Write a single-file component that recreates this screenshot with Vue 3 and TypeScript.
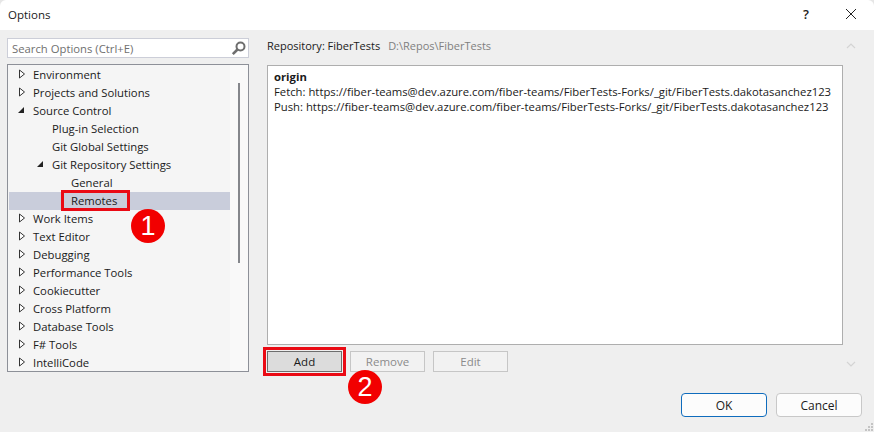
<script setup lang="ts">
interface Row { label: string; level: number; arrow: 'closed' | 'open' | 'none'; selected?: boolean; boxed?: boolean }
const rows: Row[] = [
  { label: 'Environment', level: 0, arrow: 'closed' },
  { label: 'Projects and Solutions', level: 0, arrow: 'closed' },
  { label: 'Source Control', level: 0, arrow: 'open' },
  { label: 'Plug-in Selection', level: 1, arrow: 'none' },
  { label: 'Git Global Settings', level: 1, arrow: 'none' },
  { label: 'Git Repository Settings', level: 1, arrow: 'open' },
  { label: 'General', level: 2, arrow: 'none' },
  { label: 'Remotes', level: 2, arrow: 'none', selected: true, boxed: true },
  { label: 'Work Items', level: 0, arrow: 'closed' },
  { label: 'Text Editor', level: 0, arrow: 'closed' },
  { label: 'Debugging', level: 0, arrow: 'closed' },
  { label: 'Performance Tools', level: 0, arrow: 'closed' },
  { label: 'Cookiecutter', level: 0, arrow: 'closed' },
  { label: 'Cross Platform', level: 0, arrow: 'closed' },
  { label: 'Database Tools', level: 0, arrow: 'closed' },
  { label: 'F# Tools', level: 0, arrow: 'closed' },
  { label: 'IntelliCode', level: 0, arrow: 'closed' },
]
const gripDots: [number, number][] = [[9, 1], [9, 4], [6, 4], [9, 7], [6, 7], [3, 7]]
</script>

<template>
  <div class="dialog">
    <header class="titlebar">
      <span class="title">Options</span>
      <span class="help">?</span>
      <svg class="close" width="12" height="12" viewBox="0 0 12 12"><path d="M1 1l10 10M11 1L1 11" stroke="#222" stroke-width="1" fill="none" /></svg>
    </header>

    <div class="main">
      <aside class="left">
        <div class="search">
          <span class="placeholder">Search Options (Ctrl+E)</span>
          <svg width="15" height="15" viewBox="0 0 15 15"><circle cx="9.5" cy="5.5" r="4" fill="none" stroke="#6e6e6e" stroke-width="2" /><path d="M6.5 8.5L1.8 13.2" stroke="#6e6e6e" stroke-width="2.6" /></svg>
        </div>
        <div class="tree">
          <ul class="rows">
            <li v-for="r in rows" :key="r.label" class="row" :class="{ selected: r.selected }">
              <span class="indent" :class="'lv' + r.level"></span>
              <svg class="arrow" width="8" height="10" viewBox="0 0 8 10">
                <path v-if="r.arrow === 'closed'" d="M1.5 1v8L6.5 5z" fill="#fff" stroke="#333" stroke-width="1" />
                <path v-else-if="r.arrow === 'open'" d="M0 8h6V2z" fill="#222" />
              </svg>
              <span class="label" :class="{ boxed: r.boxed }">{{ r.label }}</span>
            </li>
          </ul>
          <div class="scroll"><div class="thumb"></div></div>
          <span class="badge badge1">1</span>
        </div>
      </aside>

      <section class="right">
        <div class="content">
          <div class="repo"><span>Repository: FiberTests</span><span class="path">D:\Repos\FiberTests</span></div>
          <div class="remotes">
            <div class="name">origin</div>
            <div>Fetch: https://fiber-teams@dev.azure.com/fiber-teams/FiberTests-Forks/_git/FiberTests.dakotasanchez123</div>
            <div>Push: https://fiber-teams@dev.azure.com/fiber-teams/FiberTests-Forks/_git/FiberTests.dakotasanchez123</div>
          </div>
          <div class="actions">
            <button class="btn add">Add</button>
            <button class="btn off">Remove</button>
            <button class="btn off">Edit</button>
            <span class="badge badge2">2</span>
          </div>
        </div>
        <div class="gutter">
          <svg width="12" height="8" viewBox="0 0 12 8"><path d="M2 6l4-4 4 4" fill="none" stroke="#d4d4d4" stroke-width="1.2" /></svg>
          <svg width="12" height="8" viewBox="0 0 12 8"><path d="M2 2l4 4 4-4" fill="none" stroke="#d4d4d4" stroke-width="1.2" /></svg>
        </div>
      </section>
    </div>

    <footer class="footer">
      <button class="dlg primary">OK</button>
      <button class="dlg">Cancel</button>
    </footer>

    <svg class="grip" width="12" height="10" viewBox="0 0 12 10">
      <rect v-for="d in gripDots" :key="d[0] + '-' + d[1]" :x="d[0]" :y="d[1]" width="2" height="2" fill="#c4c4c4" />
    </svg>
    <svg class="corner corner-l" width="8" height="8" viewBox="0 0 8 8"><path d="M0 8V6a6 6 0 0 1 6-6h2V0H0z" fill="#e6e6e6" /></svg>
    <svg class="corner corner-r" width="8" height="8" viewBox="0 0 8 8"><path d="M8 8V6a6 6 0 0 0-6-6H0V0h8z" fill="#e6e6e6" /></svg>
  </div>
</template>

<style scoped>
.dialog {
  width: 874px;
  height: 432px;
  background: #efefef;
  display: flex;
  flex-direction: column;
  font-family: "Open Sans", "Noto Sans", sans-serif;
  font-size: 11.3px;
  color: #1a1a1a;
  overflow: hidden;
  position: relative;
}
.titlebar {
  height: 30px;
  box-sizing: border-box;
  background: #fff;
  display: flex;
  align-items: center;
  padding: 0 17px 2px 8px;
  flex: none;
}
.title { flex: 1; font-size: 11.5px; }
.help { font-size: 13px; margin-right: 36px; font-weight: 600; }
.main {
  display: flex;
  padding: 8px 0 0 7px;
  height: 334px;
  flex: none;
}
.left { width: 242px; display: flex; flex-direction: column; gap: 6px; flex: none; }
.search {
  height: 20px;
  box-sizing: border-box;
  background: #fff;
  border: 1px solid #ccced8;
  display: flex;
  align-items: center;
  justify-content: space-between;
  padding: 0 2px 0 4px;
}
.placeholder { color: #6f6f6f; }
.tree {
  height: 308px;
  box-sizing: border-box;
  border: 1px solid #8d9098;
  background: #f5f5f5;
  display: flex;
  position: relative;
}
.rows {
  list-style: none;
  margin: 0;
  padding: 0 0 0 1px;
  flex: 1;
  overflow: hidden;
}
.row {
  height: 18px;
  box-sizing: border-box;
  display: flex;
  align-items: center;
  padding-left: 9px;
}
.selected { background: #c9cddb; margin-top: 1px; margin-bottom: -1px; padding-bottom: 2px; }
.indent { flex: none; }
.lv1 { width: 19px; }
.lv2 { width: 38px; }
.arrow { flex: none; margin-right: 7px; width: 8px; }
.label { white-space: nowrap; position: relative; }
.boxed::after {
  content: "";
  position: absolute;
  left: -10px;
  right: -13px;
  top: -3px;
  bottom: -3px;
  border: 3px solid #ea0a14;
}
.scroll {
  width: 18px;
  flex: none;
  background: #f9f9f9;
  padding: 18px 0 0 8px;
  box-sizing: border-box;
}
.thumb { width: 2px; height: 180px; background: #85878c; }
.badge {
  position: absolute;
  width: 34px;
  height: 34px;
  border-radius: 50%;
  background: #f20000;
  color: #fff;
  font-family: "Liberation Sans", sans-serif;
  font-size: 27px;
  line-height: 34px;
  text-align: center;
}
.badge1 { left: 123px; top: 144px; }
.right { display: flex; margin-left: 18px; flex: 1; }
.content { width: 576px; flex: none; }
.repo { height: 27px; line-height: 15px; display: flex; gap: 8px; font-size: 11px; }
.path { color: #7f7f7f; }
.remotes {
  height: 280px;
  box-sizing: border-box;
  background: #fff;
  border: 1px solid #aeaeae;
  padding: 3px 6px;
  line-height: 15px;
  white-space: nowrap;
}
.name { font-weight: 700; }
.actions { display: flex; gap: 8px; margin-top: 6px; position: relative; }
.btn {
  width: 75px;
  height: 21px;
  box-sizing: border-box;
  font: inherit;
  font-size: 11.5px;
  padding: 0;
}
.add { background: #dcdcdc; border: 1px solid #6e6e6e; outline: 3px solid #ea0a14; outline-offset: 1px; color: #1a1a1a; }
.off { background: #f2f2f2; border: 1px solid #c6c6c6; color: #8b8b8b; }
.badge2 { left: 81px; top: 19px; }
.gutter {
  width: 14px;
  padding: 4px 0 0 0;
  display: flex;
  flex-direction: column;
  align-items: flex-end;
  gap: 310px;
}
.footer {
  display: flex;
  justify-content: flex-end;
  gap: 9px;
  padding: 21px 12px 0 0;
}
.dlg {
  width: 86px;
  height: 24px;
  box-sizing: border-box;
  background: #fcfcfc;
  border: 1px solid #c8c8c8;
  border-radius: 4px;
  font: inherit;
  font-size: 12px;
  color: #1b1b1b;
  padding: 0;
}
.primary { border-color: #0f6cbd; }
.grip { position: absolute; right: 0; bottom: 0; }
.corner { position: absolute; top: 0; }
.corner-l { left: 0; }
.corner-r { right: 0; }
</style>

<style>
html, body { margin: 0; padding: 0; background: #efefef; }
</style>
